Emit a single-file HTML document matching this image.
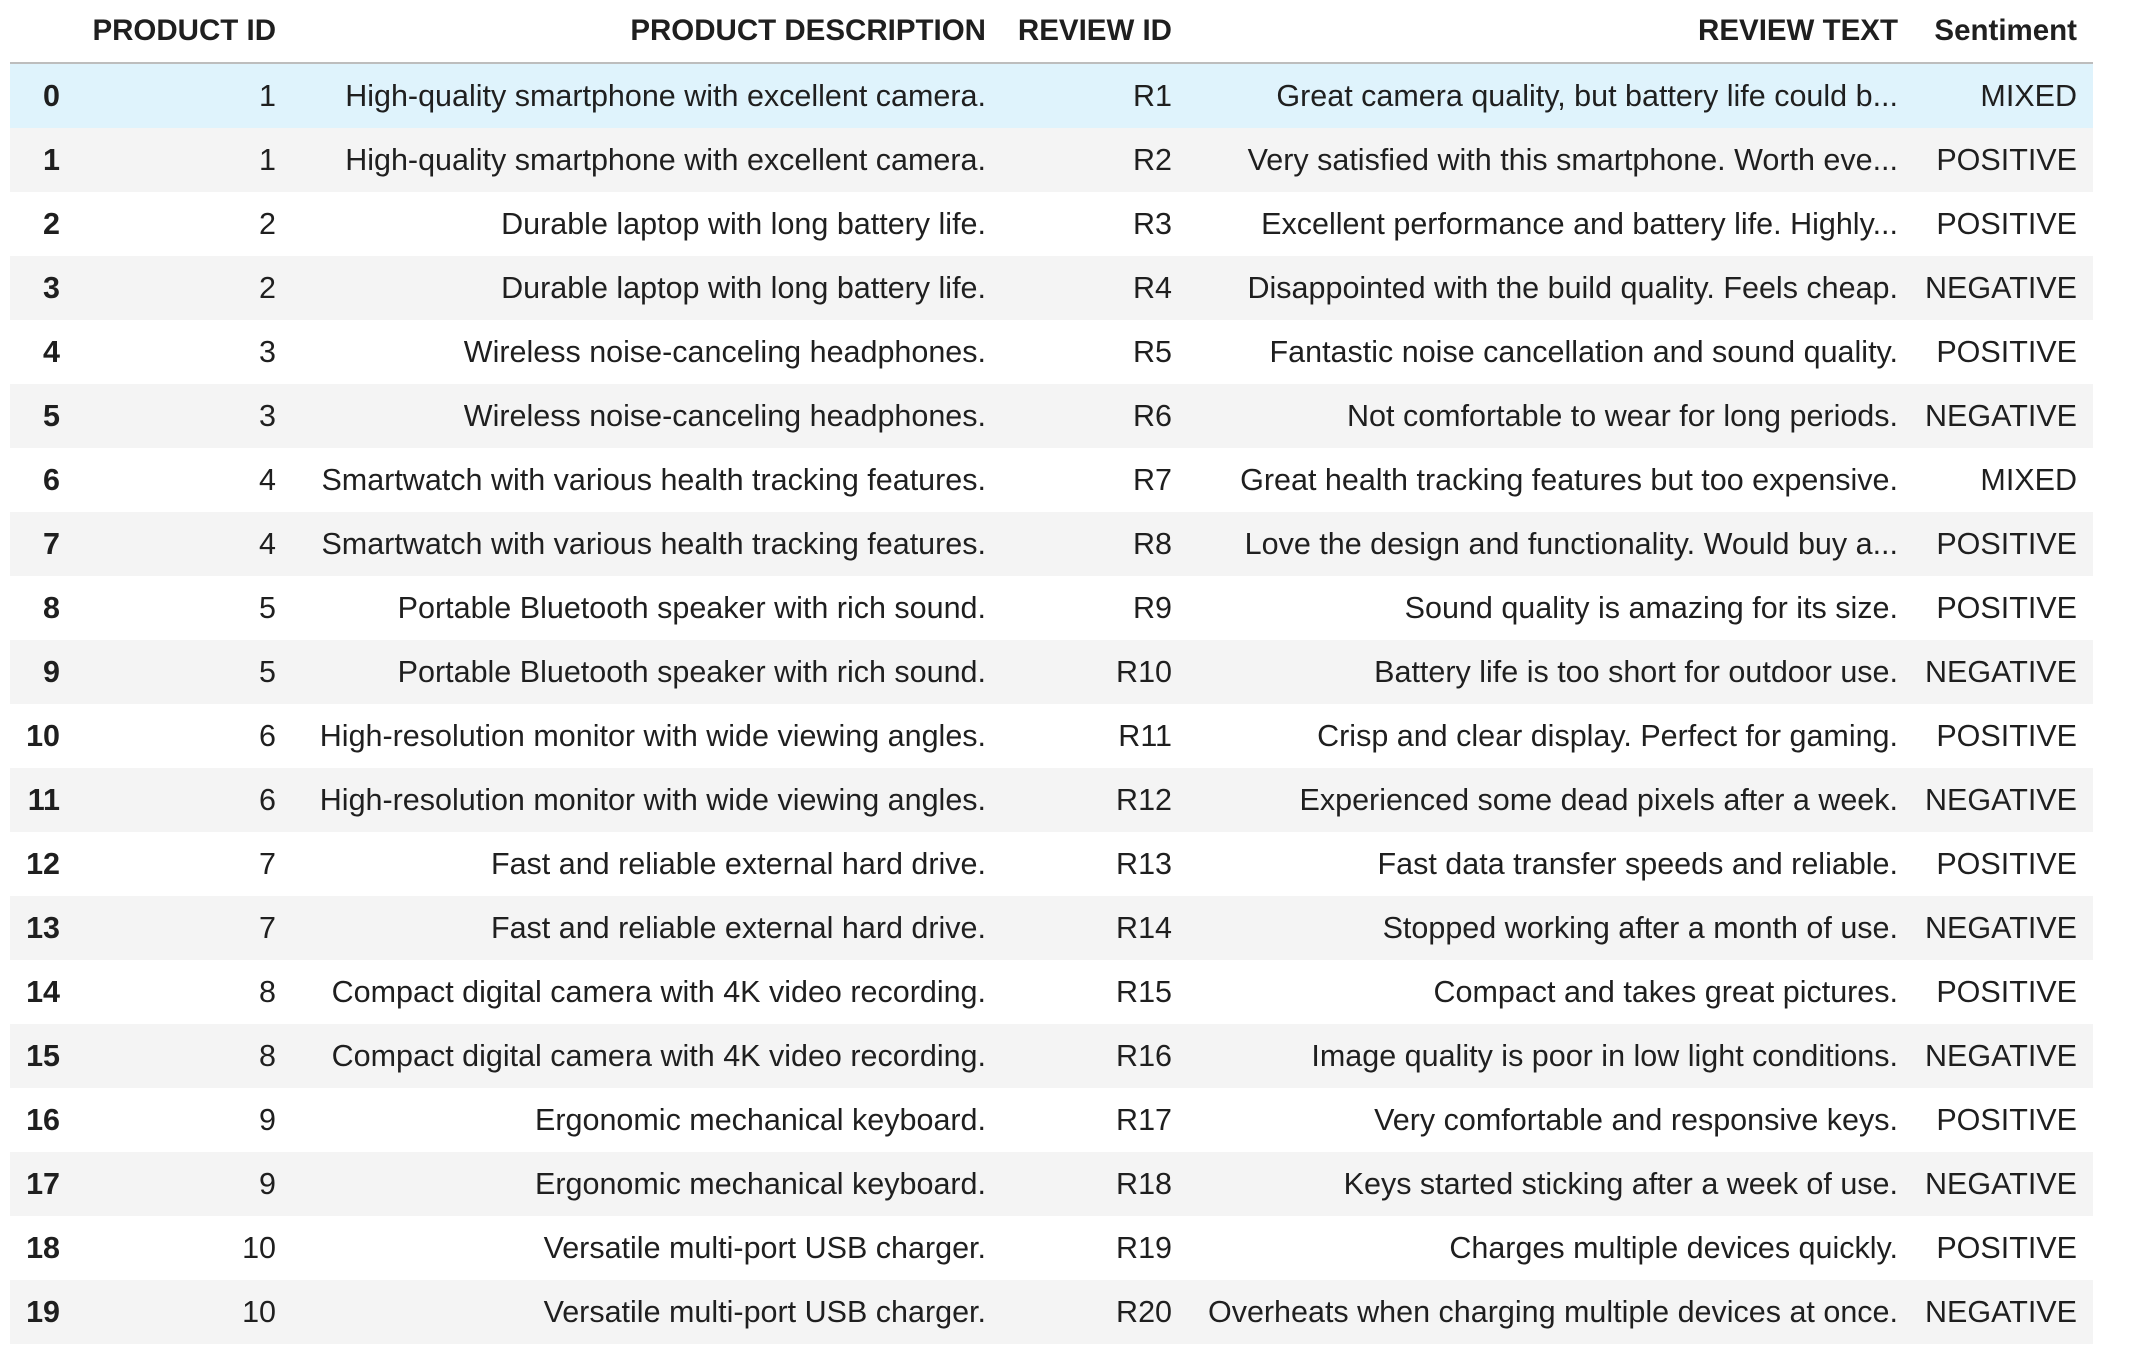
<!DOCTYPE html>
<html><head><meta charset="utf-8"><style>
html,body{margin:0;padding:0;background:#fff;width:2144px;height:1360px;overflow:hidden}
table{position:absolute;left:10px;top:0;border-collapse:collapse;table-layout:fixed;width:2083px;font-family:"Liberation Sans",sans-serif;font-size:30.5px;color:#1f1f1f}
td,th{text-align:right;padding:0 16px 0 0;white-space:nowrap;overflow:hidden}
th{height:62px;font-weight:bold;font-size:29.5px;border-bottom:2px solid #bdbdbd;vertical-align:middle}
td{height:64px}
td:first-child{font-weight:bold}
tbody tr:nth-child(even){background:#f4f4f4}
tbody tr:first-child{background:#dff3fc}
</style></head><body>
<table>
<colgroup><col style="width:66px"><col style="width:216px"><col style="width:710px"><col style="width:186px"><col style="width:726px"><col style="width:179px"></colgroup>
<thead><tr><th></th><th>PRODUCT ID</th><th>PRODUCT DESCRIPTION</th><th>REVIEW ID</th><th>REVIEW TEXT</th><th>Sentiment</th></tr></thead>
<tbody>
<tr><td>0</td><td>1</td><td>High-quality smartphone with excellent camera.</td><td>R1</td><td>Great camera quality, but battery life could b...</td><td>MIXED</td></tr>
<tr><td>1</td><td>1</td><td>High-quality smartphone with excellent camera.</td><td>R2</td><td>Very satisfied with this smartphone. Worth eve...</td><td>POSITIVE</td></tr>
<tr><td>2</td><td>2</td><td>Durable laptop with long battery life.</td><td>R3</td><td>Excellent performance and battery life. Highly...</td><td>POSITIVE</td></tr>
<tr><td>3</td><td>2</td><td>Durable laptop with long battery life.</td><td>R4</td><td>Disappointed with the build quality. Feels cheap.</td><td>NEGATIVE</td></tr>
<tr><td>4</td><td>3</td><td>Wireless noise-canceling headphones.</td><td>R5</td><td>Fantastic noise cancellation and sound quality.</td><td>POSITIVE</td></tr>
<tr><td>5</td><td>3</td><td>Wireless noise-canceling headphones.</td><td>R6</td><td>Not comfortable to wear for long periods.</td><td>NEGATIVE</td></tr>
<tr><td>6</td><td>4</td><td>Smartwatch with various health tracking features.</td><td>R7</td><td>Great health tracking features but too expensive.</td><td>MIXED</td></tr>
<tr><td>7</td><td>4</td><td>Smartwatch with various health tracking features.</td><td>R8</td><td>Love the design and functionality. Would buy a...</td><td>POSITIVE</td></tr>
<tr><td>8</td><td>5</td><td>Portable Bluetooth speaker with rich sound.</td><td>R9</td><td>Sound quality is amazing for its size.</td><td>POSITIVE</td></tr>
<tr><td>9</td><td>5</td><td>Portable Bluetooth speaker with rich sound.</td><td>R10</td><td>Battery life is too short for outdoor use.</td><td>NEGATIVE</td></tr>
<tr><td>10</td><td>6</td><td>High-resolution monitor with wide viewing angles.</td><td>R11</td><td>Crisp and clear display. Perfect for gaming.</td><td>POSITIVE</td></tr>
<tr><td>11</td><td>6</td><td>High-resolution monitor with wide viewing angles.</td><td>R12</td><td>Experienced some dead pixels after a week.</td><td>NEGATIVE</td></tr>
<tr><td>12</td><td>7</td><td>Fast and reliable external hard drive.</td><td>R13</td><td>Fast data transfer speeds and reliable.</td><td>POSITIVE</td></tr>
<tr><td>13</td><td>7</td><td>Fast and reliable external hard drive.</td><td>R14</td><td>Stopped working after a month of use.</td><td>NEGATIVE</td></tr>
<tr><td>14</td><td>8</td><td>Compact digital camera with 4K video recording.</td><td>R15</td><td>Compact and takes great pictures.</td><td>POSITIVE</td></tr>
<tr><td>15</td><td>8</td><td>Compact digital camera with 4K video recording.</td><td>R16</td><td>Image quality is poor in low light conditions.</td><td>NEGATIVE</td></tr>
<tr><td>16</td><td>9</td><td>Ergonomic mechanical keyboard.</td><td>R17</td><td>Very comfortable and responsive keys.</td><td>POSITIVE</td></tr>
<tr><td>17</td><td>9</td><td>Ergonomic mechanical keyboard.</td><td>R18</td><td>Keys started sticking after a week of use.</td><td>NEGATIVE</td></tr>
<tr><td>18</td><td>10</td><td>Versatile multi-port USB charger.</td><td>R19</td><td>Charges multiple devices quickly.</td><td>POSITIVE</td></tr>
<tr><td>19</td><td>10</td><td>Versatile multi-port USB charger.</td><td>R20</td><td>Overheats when charging multiple devices at once.</td><td>NEGATIVE</td></tr>
</tbody></table>
</body></html>
